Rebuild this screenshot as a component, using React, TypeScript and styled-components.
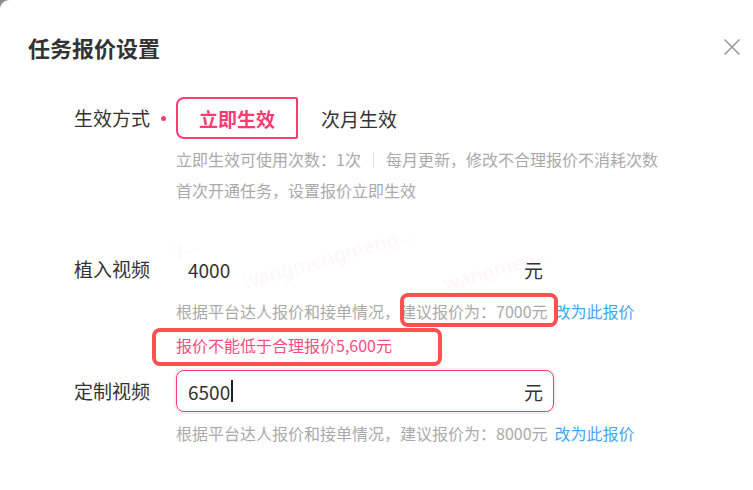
import React from "react";
import styled, { createGlobalStyle, css } from "styled-components";

const PINK = "#ff3b74";
const MARK = "#ff5050";

const Global = createGlobalStyle`
  html, body { margin: 0; padding: 0; }
  body {
    background: #8c8c8c;
    font-family: "Noto Sans CJK SC", "Noto Sans", sans-serif;
    overflow: hidden;
  }
`;

const Dialog = styled.div`
  position: relative;
  width: 753px;
  height: 490px;
  background: #fff;
  border-top-left-radius: 9px;
  padding-top: 32px;
  box-sizing: border-box;
  overflow: hidden;
`;

const Header = styled.div`
  display: flex;
  justify-content: space-between;
  align-items: center;
  padding: 0 12px 0 28px;
  height: 30px;
`;

const Title = styled.h1`
  margin: 0;
  font-size: 22px;
  line-height: 30px;
  font-weight: 700;
  color: #333;
`;

const Close = styled.button`
  border: 0;
  background: none;
  padding: 0;
  width: 18px;
  height: 18px;
  display: flex;
  cursor: pointer;
`;

const Form = styled.div`
  display: flex;
  flex-direction: column;
  margin-top: 35px;
`;

const Row = styled.div<{ $mb?: number }>`
  display: grid;
  grid-template-columns: 150px 26px 1fr;
  align-items: start;
  margin-bottom: ${(p) => p.$mb ?? 0}px;
`;

const Label = styled.div`
  text-align: right;
  font-size: 19px;
  line-height: 42px;
  color: #333;
  white-space: nowrap;
`;

const Marker = styled.div`
  display: flex;
  justify-content: center;
  padding-top: 19px;
`;

const Dot = styled.span`
  width: 5px;
  height: 5px;
  border-radius: 50%;
  background: ${PINK};
`;

const Content = styled.div`
  display: flex;
  flex-direction: column;
  align-items: flex-start;
`;

const Segment = styled.div`
  display: flex;
`;

const Choice = styled.button<{ $active?: boolean }>`
  height: 42px;
  padding: 0 21px;
  box-sizing: border-box;
  background: #fff;
  font-family: inherit;
  font-size: 19px;
  cursor: pointer;
  border: 2px solid transparent;
  color: #333;
  ${(p) =>
    p.$active &&
    css`
      border-color: ${PINK};
      border-radius: 8px 2px 2px 8px;
      color: ${PINK};
      font-weight: 700;
    `}
`;

const Help = styled.div<{ $mt?: number }>`
  font-size: 16px;
  line-height: 31px;
  color: #aaa;
  margin-top: ${(p) => p.$mt ?? 0}px;
  white-space: nowrap;
`;

const Divider = styled.span`
  display: inline-block;
  width: 1px;
  height: 14px;
  background: #ddd;
  margin: 0 12px;
  vertical-align: -1px;
`;

const Link = styled.a`
  color: #3ea8f5;
  text-decoration: none;
  margin-left: 7px;
  cursor: pointer;
`;

const ErrorText = styled.div`
  font-size: 16px;
  line-height: 31px;
  color: #fa4c7e;
  margin-top: 3px;
  white-space: nowrap;
`;

const Marked = styled.span<{ $l: number; $r: number; $t: number; $b: number }>`
  position: relative;
  &::after {
    content: "";
    position: absolute;
    left: ${(p) => p.$l}px;
    right: ${(p) => p.$r}px;
    top: ${(p) => p.$t}px;
    bottom: ${(p) => p.$b}px;
    border: 4.5px solid ${MARK};
    border-radius: 8px;
    pointer-events: none;
  }
`;

const Field = styled.div<{ $focused?: boolean }>`
  width: 378px;
  height: 42px;
  box-sizing: border-box;
  display: flex;
  align-items: center;
  justify-content: space-between;
  padding: 0 10px 0 11px;
  border: 1px solid transparent;
  border-radius: 8px;
  font-size: 19px;
  color: #333;
  ${(p) =>
    p.$focused &&
    css`
      border-color: ${PINK};
      box-shadow: 0 0 0 2px rgba(255, 59, 116, 0.1);
    `}
`;

const Value = styled.span`
  display: flex;
  align-items: center;
`;

const Caret = styled.span`
  display: inline-block;
  width: 2px;
  height: 22px;
  background: #222;
  margin-left: 1px;
`;

const Watermark = styled.span<{ $x: number; $y: number }>`
  position: absolute;
  left: ${(p) => p.$x}px;
  top: ${(p) => p.$y}px;
  font-family: "Noto Sans", sans-serif;
  font-size: 20px;
  line-height: 20px;
  color: rgba(255, 90, 130, 0.07);
  transform: rotate(-16deg);
  transform-origin: left bottom;
  pointer-events: none;
  white-space: nowrap;
`;

export default function App() {
  return (
    <>
      <Global />
      <Dialog>
        <Header>
          <Title>任务报价设置</Title>
          <Close aria-label="close">
            <svg width="18" height="18" viewBox="0 0 18 18">
              <path d="M1.5 1.5 L16.5 16.5 M16.5 1.5 L1.5 16.5" stroke="#9a9a9a" strokeWidth="1.6" fill="none" />
            </svg>
          </Close>
        </Header>
        <Form>
          <Row $mb={42}>
            <Label>生效方式</Label>
            <Marker>
              <Dot />
            </Marker>
            <Content>
              <Segment>
                <Choice $active>立即生效</Choice>
                <Choice>次月生效</Choice>
              </Segment>
              <Help $mt={5}>
                立即生效可使用次数：1次
                <Divider />
                每月更新，修改不合理报价不消耗次数
              </Help>
              <Help>首次开通任务，设置报价立即生效</Help>
            </Content>
          </Row>
          <Row $mb={9}>
            <Label>植入视频</Label>
            <div />
            <Content>
              <Field>
                <Value>4000</Value>
                <span>元</span>
              </Field>
              <Help $mt={6}>
                根据平台达人报价和接单情况，
                <Marked $l={0} $r={-10} $t={-6} $b={-4}>建议报价为：7000元</Marked>
                <Link>改为此报价</Link>
              </Help>
              <ErrorText>
                <Marked $l={-24} $r={-50} $t={-5} $b={-9}>报价不能低于合理报价5,600元</Marked>
              </ErrorText>
            </Content>
          </Row>
          <Row>
            <Label>定制视频</Label>
            <div />
            <Content>
              <Field $focused>
                <Value>
                  6500
                  <Caret />
                </Value>
                <span>元</span>
              </Field>
              <Help $mt={6}>
                根据平台达人报价和接单情况，建议报价为：8000元
                <Link>改为此报价</Link>
              </Help>
            </Content>
          </Row>
        </Form>
        <Watermark $x={176} $y={240}>y...</Watermark>
        <Watermark $x={246} $y={272}>wangmengmeng...</Watermark>
        <Watermark $x={447} $y={274}>wangmen...</Watermark>
      </Dialog>
    </>
  );
}
